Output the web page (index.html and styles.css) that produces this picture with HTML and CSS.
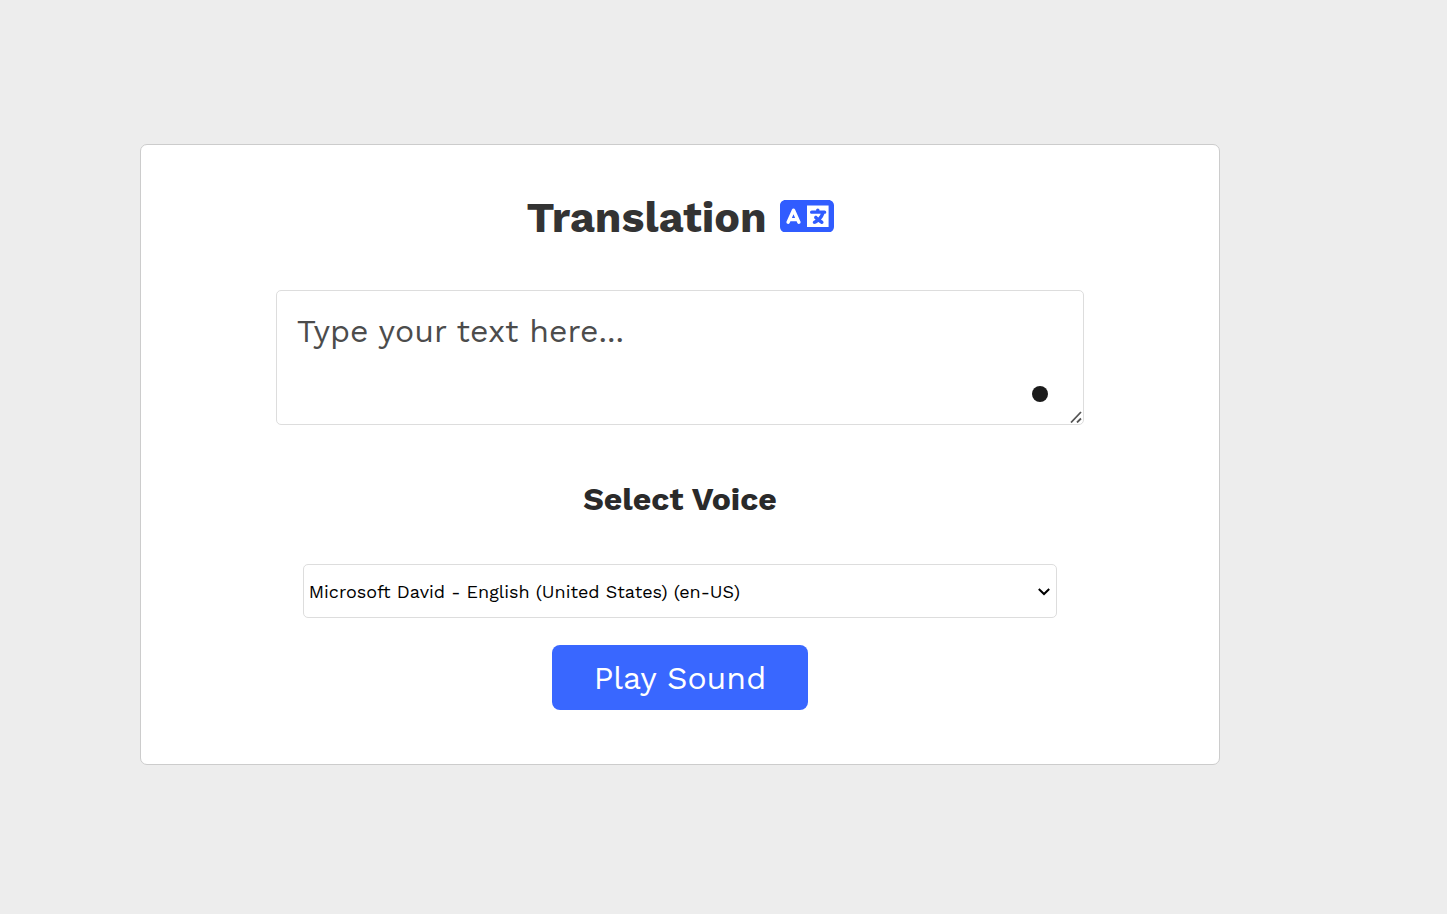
FILE: index.html
```html
<!DOCTYPE html>
<html lang="en">
<head>
<meta charset="utf-8">
<meta name="viewport" content="width=device-width, initial-scale=1">
<title>Translation</title>
<link rel="stylesheet" href="styles.css">
</head>
<body class="page">
<main class="card">
  <h1 class="title">
    <span>Translation</span>
    <svg class="title-icon" viewBox="0 64 640 384" aria-hidden="true"><path fill="currentColor" d="M0 128C0 92.7 28.7 64 64 64H256h48 16H576c35.3 0 64 28.7 64 64V384c0 35.3-28.7 64-64 64H320 304 256 64c-35.3 0-64-28.7-64-64V128zm320 0V384H576V128H320zM178.3 175.9c-3.2-7.2-10.4-11.9-18.3-11.9s-15.1 4.7-18.3 11.9l-64 144c-4.5 10.1 .1 21.9 10.2 26.4s21.9-.1 26.4-10.2l8.9-20.1h73.6l8.9 20.1c4.5 10.1 16.3 14.6 26.4 10.2s14.6-16.3 10.2-26.4l-64-144zM160 233.2L179 276H141l19-42.8zM448 164c11 0 20 9 20 20v4h44 16c11 0 20 9 20 20s-9 20-20 20h-2l-1.6 4.5c-8.9 24.4-22.4 46.6-39.6 65.4c.9 .6 1.8 1.1 2.7 1.6l18.9 11.3c9.5 5.7 12.5 18 6.9 27.4s-18 12.5-27.4 6.9l-18.9-11.3c-4.5-2.7-8.8-5.5-13.1-8.5c-10.6 7.5-21.9 14-34 19.4l-3.6 1.6c-10.1 4.5-21.9-.1-26.4-10.2s.1-21.9 10.2-26.4l3.6-1.6c6.4-2.9 12.6-6.1 18.5-9.8l-12.2-12.2c-7.8-7.8-7.8-20.5 0-28.3s20.5-7.8 28.3 0l14.6 14.6 .5 .5c12.4-13.1 22.5-28.3 29.8-45H448 376c-11 0-20-9-20-20s9-20 20-20h52v-4c0-11 9-20 20-20z"/></svg>
  </h1>
  <div class="editor">
    <textarea class="editor-text" aria-label="Text" placeholder="Type your text here..."></textarea>
    <span class="editor-dot"></span>
    <svg class="editor-grip" viewBox="0 0 12 12" aria-hidden="true"><path d="M1 11.500 11 1M7 11.500l4-4" fill="none" stroke="currentColor" stroke-width="1.800"/></svg>
  </div>
  <label class="subtitle" for="voice">Select Voice</label>
  <div class="voice">
    <select class="voice-select" id="voice">
      <option>Microsoft David - English (United States) (en-US)</option>
    </select>
    <svg class="voice-arrow" viewBox="0 0 12 8" aria-hidden="true"><path d="M.8 1 6 6l5.200-5" fill="none" stroke="currentColor" stroke-width="2"/></svg>
  </div>
  <button class="play" type="button">Play Sound</button>
</main>
</body>
</html>
```
FILE: styles.css
```css
* {
  box-sizing: border-box;
}

.page {
  margin: 0;
  padding: 144px 227px 144px 140px;
  background: #ededed;
  font-family: "Work Sans", Inter, sans-serif;
}

.card {
  display: flex;
  flex-direction: column;
  align-items: center;
  padding: 46px 0 54px;
  background: #fff;
  border: 1px solid #ccc;
  border-radius: 7px;
}

.title {
  display: flex;
  align-items: center;
  gap: 13px;
  margin: 0 0 47px;
  color: #333;
  font-size: 43px;
  font-weight: 700;
  line-height: 52px;
}

.title-icon {
  width: 54px;
  margin-bottom: 2px;
  color: #305cff;
}

.editor {
  position: relative;
  display: flex;
  width: 75%;
}

.editor-text {
  width: 100%;
  height: 135px;
  padding: 20px;
  background: #fff;
  border: 1px solid #ddd;
  border-radius: 5px;
  color: #333;
  font: 400 32px/40px "Work Sans", Inter, sans-serif;
}

.editor-text::placeholder {
  color: #4c4c4c;
}

.editor-text::-webkit-resizer {
  background: transparent;
}

.editor-dot {
  position: absolute;
  right: 36px;
  bottom: 23px;
  width: 16px;
  height: 16px;
  background: #1b1b1b;
  border-radius: 50%;
}

.editor-grip {
  position: absolute;
  right: 2px;
  bottom: 2px;
  width: 12px;
  height: 12px;
  color: #555;
  pointer-events: none;
}

.subtitle {
  margin: 54px 0 45px;
  color: #2a2a2a;
  font-size: 32px;
  font-weight: 700;
  line-height: 40px;
}

.voice {
  position: relative;
  display: flex;
  width: 70%;
  margin-bottom: 27px;
}

.voice-select {
  width: 100%;
  height: 54px;
  padding: 0 24px 0 5px;
  appearance: none;
  background: #fff;
  border: 1px solid #ddd;
  border-radius: 5px;
  color: #000;
  font: 400 18px "Work Sans", Inter, sans-serif;
}

.voice-arrow {
  position: absolute;
  top: 24px;
  right: 7px;
  width: 12px;
  height: 8px;
  pointer-events: none;
}

.play {
  padding: 13px 42px 11px;
  background: #3967ff;
  border: 0;
  border-radius: 8px;
  color: #fff;
  font: 400 32px/41px "Work Sans", Inter, sans-serif;
}
```
